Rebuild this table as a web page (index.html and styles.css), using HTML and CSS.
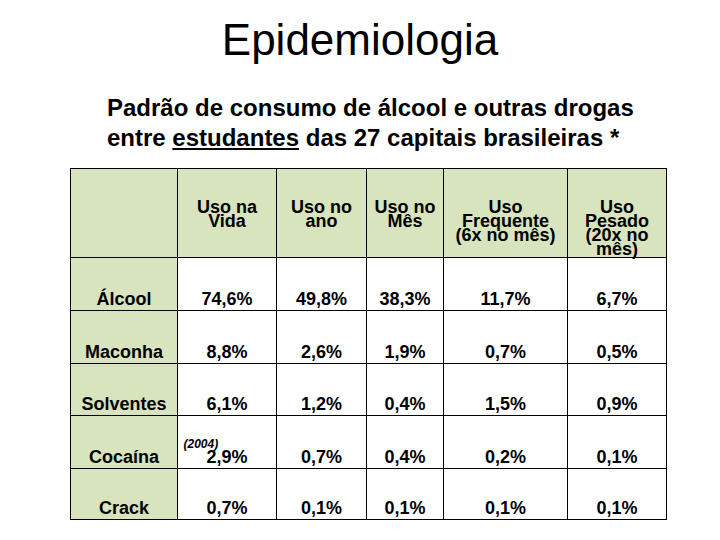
FILE: index.html
```html
<!DOCTYPE html>
<html lang="pt">
<head>
<meta charset="utf-8">
<title>Epidemiologia</title>
<link rel="stylesheet" href="styles.css">
</head>
<body>
<div class="slide">
  <h1 class="title">Epidemiologia</h1>
  <p class="subtitle">Padrão de consumo de álcool e outras drogas<br>entre <u>estudantes</u> das 27 capitais brasileiras *</p>
  <table class="data">
    <colgroup>
      <col class="c1"><col class="c2"><col class="c3"><col class="c4"><col class="c5"><col class="c6">
    </colgroup>
    <thead>
      <tr class="head-row">
        <th class="corner"></th>
        <th>Uso na Vida</th>
        <th>Uso no ano</th>
        <th>Uso no Mês</th>
        <th>Uso<br>Frequente<br>(6x no mês)</th>
        <th>Uso<br>Pesado<br>(20x no<br>mês)</th>
      </tr>
    </thead>
    <tbody>
      <tr class="r1">
        <th class="label">Álcool</th>
        <td>74,6%</td><td>49,8%</td><td>38,3%</td><td>11,7%</td><td>6,7%</td>
      </tr>
      <tr class="r2">
        <th class="label">Maconha</th>
        <td>8,8%</td><td>2,6%</td><td>1,9%</td><td>0,7%</td><td>0,5%</td>
      </tr>
      <tr class="r3">
        <th class="label">Solventes</th>
        <td>6,1%</td><td>1,2%</td><td>0,4%</td><td>1,5%</td><td>0,9%</td>
      </tr>
      <tr class="r4">
        <th class="label">Cocaína</th>
        <td><span class="val">2,9%<span class="note">(2004)</span></span></td><td>0,7%</td><td>0,4%</td><td>0,2%</td><td>0,1%</td>
      </tr>
      <tr class="r5">
        <th class="label">Crack</th>
        <td>0,7%</td><td>0,1%</td><td>0,1%</td><td>0,1%</td><td>0,1%</td>
      </tr>
    </tbody>
  </table>
</div>
</body>
</html>
```

FILE: styles.css
```css
html, body {
  margin: 0;
  padding: 0;
  background: #ffffff;
}

.slide {
  width: 720px;
  height: 540px;
  overflow: hidden;
  font-family: "Liberation Sans", Arial, sans-serif;
  color: #000;
}

.title {
  margin: 18px 0 0 0;
  font-size: 44px;
  line-height: 44px;
  font-weight: normal;
  text-align: center;
}

.subtitle {
  margin: 31px 0 0 107px;
  font-size: 24px;
  line-height: 30px;
  font-weight: bold;
}

.subtitle u {
  text-underline-offset: 2px;
  text-decoration-thickness: 2px;
}

.data {
  margin: 15px 0 0 70px;
  border-collapse: collapse;
  table-layout: fixed;
  width: 597px;
  font-size: 18px;
  font-weight: bold;
}

.c1 { width: 107px; }
.c2 { width: 99px; }
.c3 { width: 90px; }
.c4 { width: 77px; }
.c5 { width: 124px; }
.c6 { width: 99px; }

.data th,
.data td {
  border: 1px solid #000;
  padding: 0;
  text-align: center;
}

.head-row th {
  height: 57px;
  background: #d7e4bd;
  vertical-align: top;
  padding-top: 31px;
  line-height: 14px;
}

.data tbody th.label {
  background: #d7e4bd;
}

.data tbody th,
.data tbody td {
  vertical-align: bottom;
  line-height: 20px;
  padding-bottom: 1px;
}

.r1 th, .r1 td { height: 51px; }
.r2 th, .r2 td { height: 51px; }
.r3 th, .r3 td { height: 50px; }
.r4 th, .r4 td { height: 51px; }
.r5 th, .r5 td { height: 49px; }

.val {
  position: relative;
}

.note {
  position: absolute;
  left: -23px;
  top: -9px;
  font-size: 12px;
  font-style: italic;
  font-weight: bold;
  line-height: 12px;
  white-space: nowrap;
}
```
